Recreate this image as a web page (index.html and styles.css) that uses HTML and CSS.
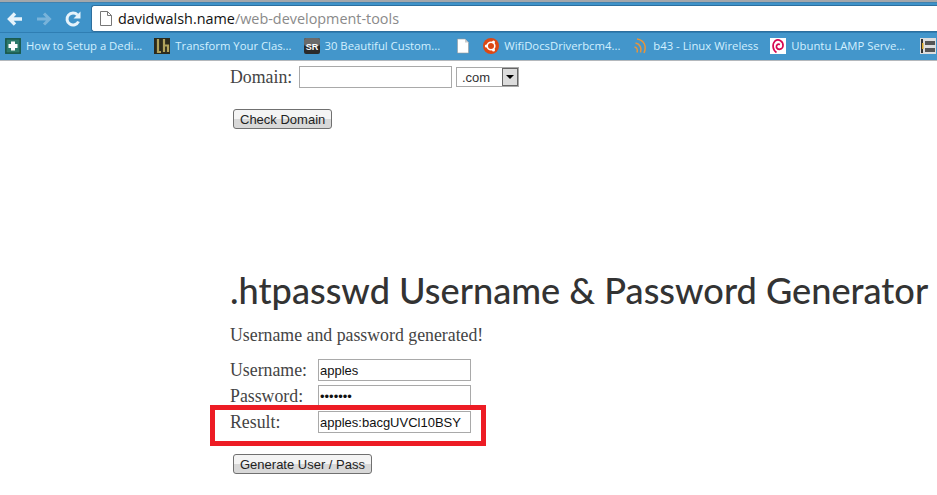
FILE: index.html
```html
<!DOCTYPE html>
<html lang="en">
<head>
    <meta charset="UTF-8">
    <title>.htpasswd Username &amp; Password Generator</title>
    <link rel="stylesheet" href="styles.css">
</head>
<body>
    <header class="chrome">
        <div class="tabstrip"></div>
        <div class="toolbar">
            <svg class="nav-icon" viewBox="0 0 18 18"><path d="M16 9H4M9 3.500L3.500 9L9 14.500" fill="none" stroke="#e6f3fb" stroke-width="3.400"/></svg>
            <svg class="nav-icon" viewBox="0 0 18 18"><path d="M2 9H14M9 3.500L14.500 9L9 14.500" fill="none" stroke="#78b3da" stroke-width="3"/></svg>
            <svg class="nav-icon" viewBox="0 0 18 18"><path d="M14.500 11.500A6 6 0 1 1 13.500 5" fill="none" stroke="#e6f3fb" stroke-width="3"/><path d="M16.500 1.500V8.500H9.500Z" fill="#e6f3fb"/></svg>
            <div class="omnibox">
                <svg class="page-icon" viewBox="0 0 12 15"><path d="M.5.500H7.500L11.500 4.500V14.500H.5Z M7.500.500V4.500H11.500" fill="#fff" stroke="#777"/></svg>
                <span class="host">davidwalsh.name</span><span class="path">/web-development-tools</span>
            </div>
        </div>
        <nav class="bookmarks">
            <a class="bookmark">
                <svg class="favicon" viewBox="0 0 16 16"><rect width="16" height="16" fill="#1f6b5c"/><rect x="1" y="1" width="14" height="14" fill="#2d7a6b" stroke="#174f45"/><path d="M8 3.500V12.500M3.500 8H12.500" stroke="#fff" stroke-width="4"/></svg>
                How to Setup a Dedi...
            </a>
            <a class="bookmark">
                <svg class="favicon" viewBox="0 0 16 16"><rect width="16" height="16" fill="#2c2a1c"/><path d="M4 1V14H7M10 1V14M10 7.500H14V14" fill="none" stroke="#b0a25c" stroke-width="2.200"/></svg>
                Transform Your Clas...
            </a>
            <a class="bookmark">
                <svg class="favicon" viewBox="0 0 16 16"><rect width="16" height="16" rx="2" fill="#2b2b2b"/><rect width="16" height="8" rx="2" fill="#6a6a6a"/><text class="favicon-text" x="8" y="11.500">SR</text></svg>
                30 Beautiful Custom...
            </a>
            <svg class="favicon favicon-plain" viewBox="0 0 16 16"><path d="M2.500 1H10L13.500 4.500V15H2.500Z" fill="#fff" stroke="#999" stroke-width=".6"/><path d="M10 1V4.500H13.500Z" fill="#ccc"/></svg>
            <a class="bookmark">
                <svg class="favicon" viewBox="0 0 16 16"><circle cx="8" cy="8" r="8" fill="#dd4814"/><circle cx="8" cy="8" r="3.800" fill="none" stroke="#fff" stroke-width="1.600"/><circle cx="3.300" cy="8" r="1.500" fill="#fff"/><circle cx="10.500" cy="3.900" r="1.500" fill="#fff"/><circle cx="10.500" cy="12.100" r="1.500" fill="#fff"/></svg>
                WifiDocsDriverbcm4...
            </a>
            <a class="bookmark">
                <svg class="favicon" viewBox="0 0 16 16"><g fill="none" stroke="#e8943a" stroke-width="1.500"><path d="M5 1C12 2 15 8 12 15"/><path d="M3.500 5C8 6 10 10 8.500 14.500"/><path d="M2.500 9C5 9.500 6 12 5 14.500"/></g></svg>
                b43 - Linux Wireless
            </a>
            <a class="bookmark">
                <svg class="favicon" viewBox="0 0 16 16"><rect width="16" height="16" fill="#fff"/><path d="M6.500 14.500C2.500 12 2 6 5 3C8.500 .5 13.500 3 13 8C12.500 11.500 8 12.500 6.500 9.500C6 7.500 7.500 5.500 10 6.500" fill="none" stroke="#d70751" stroke-width="1.700"/></svg>
                Ubuntu LAMP Serve...
            </a>
            <svg class="favicon favicon-last" viewBox="0 0 16 16"><rect width="16" height="16" fill="#ddd"/><rect x="5" y="3" width="10" height="4" fill="#555"/><rect x="5" y="10" width="10" height="4" fill="#555"/><rect x="1" y="1" width="2" height="14" fill="#333"/><rect x="2" y="5" width="1.500" height="6" fill="#d9a520"/></svg>
        </nav>
    </header>

    <main class="content">
        <form class="domain-form">
            <div class="domain-row">
                <label class="domain-label" for="domain">Domain:</label>
                <input class="text-field" type="text" id="domain">
                <div class="tld-select">
                    <span class="tld-value">.com</span>
                    <span class="tld-arrow"></span>
                </div>
            </div>
            <button class="form-button" type="button">Check Domain</button>
        </form>

        <h1 class="title">.htpasswd Username &amp; Password Generator</h1>
        <p class="status">Username and password generated!</p>

        <form class="generator">
            <div class="generator-row">
                <label for="username">Username:</label>
                <input class="text-field" type="text" id="username" value="apples">
            </div>
            <div class="generator-row">
                <label for="password">Password:</label>
                <input class="text-field" type="password" id="password" value="apples1">
            </div>
            <div class="generator-row">
                <label for="result">Result:</label>
                <input class="text-field" type="text" id="result" value="apples:bacgUVCl10BSY">
                <div class="highlight"></div>
            </div>
            <button class="form-button" type="button">Generate User / Pass</button>
        </form>
    </main>
</body>
</html>
```

FILE: styles.css
```css
html, body {
    margin: 0;
    height: 100%;
    overflow: hidden;
    background: #fff;
}
.chrome {
    background-color: #4396cb;
    border-bottom: 1px solid #b4b8bc;
}
.tabstrip {
    height: 2px;
    background: #a3a7ab;
    border-bottom: 1px solid #3f82b0;
}
.toolbar {
    display: flex;
    align-items: center;
    height: 29px;
    padding-left: 6px;
    background: #3f93c9;
    box-sizing: border-box;
    padding-top: 2px;
}
.nav-icon {
    width: 18px;
    height: 18px;
    margin-right: 11px;
}
.omnibox {
    display: flex;
    align-items: center;
    flex: 1;
    height: 27px;
    margin-left: -2px;
    padding-left: 8px;
    background: #fff;
    border: 1px solid #2d6f9e;
    border-right: none;
    border-radius: 3px 0 0 3px;
    box-sizing: border-box;
    font-family: "Open Sans", sans-serif;
    font-size: 14.400px;
}
.page-icon {
    width: 12px;
    height: 15px;
    margin-right: 6px;
}
.host {
    color: #111;
}
.path {
    color: #8a8a8a;
}
.bookmarks {
    display: flex;
    align-items: center;
    gap: 12px;
    height: 28px;
    padding: 0 0 2px 5px;
    background: #4396cb;
    border-top: 1px solid #2f7eb3;
    box-sizing: border-box;
    overflow: hidden;
}
.bookmark {
    display: flex;
    align-items: center;
    gap: 5px;
    flex: none;
    white-space: nowrap;
    color: #d2f0ff;
    font-family: "Open Sans", sans-serif;
    font-size: 11.300px;
}
.favicon {
    width: 16px;
    height: 16px;
    flex: none;
}
.favicon-plain {
    margin-left: 3px;
}
.favicon-last {
    margin-left: 3px;
}
.favicon-text {
    fill: #fff;
    font-family: "Liberation Sans", sans-serif;
    font-size: 9px;
    font-weight: bold;
    text-anchor: middle;
}
.content {
    padding: 5px 0 0 230px;
    font-family: "Liberation Serif", serif;
    font-size: 17.800px;
    color: #444;
}
.text-field {
    width: 153px;
    height: 22px;
    padding: 1px;
    border: 1px solid #a9a9a9;
    box-sizing: border-box;
    font-family: "Liberation Sans", sans-serif;
    font-size: 13px;
    color: #111;
    background: #fff;
}
.domain-row {
    display: flex;
    align-items: center;
    height: 22px;
}
.domain-label {
    width: 69px;
}
.tld-select {
    display: flex;
    align-items: center;
    justify-content: space-between;
    width: 63px;
    height: 20px;
    margin-left: 4px;
    box-sizing: border-box;
    border: 1px solid #a9a9a9;
    padding-left: 5px;
    font-family: "Liberation Sans", sans-serif;
    font-size: 13px;
    color: #333;
}
.tld-arrow {
    position: relative;
    width: 16px;
    height: 18px;
    box-sizing: border-box;
    background: #dcdcdc;
    border: 1px solid #666;
}
.tld-arrow::after {
    content: "";
    position: absolute;
    left: 3px;
    top: 6px;
    border-left: 4px solid transparent;
    border-right: 4px solid transparent;
    border-top: 4px solid #000;
}
.form-button {
    display: block;
    margin-left: 3px;
    height: 20px;
    padding: 0 6px;
    border: 1px solid #707070;
    border-radius: 3px;
    background: linear-gradient(#f4f4f4 50%, #d8d8d8 50%);
    font-family: "Liberation Sans", sans-serif;
    font-size: 13px;
    color: #222;
}
.domain-form .form-button {
    margin-top: 21px;
}
.title {
    margin: 139px 0 0;
    font-family: Lato, sans-serif;
    font-size: 36.150px;
    line-height: 44px;
    font-weight: 500;
    color: #333;
    white-space: nowrap;
}
.status {
    margin: 13px 0 14px;
    line-height: 20px;
}
.generator-row {
    position: relative;
    display: flex;
    align-items: center;
    height: 22px;
    margin-bottom: 4px;
}
.generator-row label {
    width: 88px;
}
.highlight {
    position: absolute;
    left: -20px;
    top: -6px;
    width: 276px;
    height: 41px;
    box-sizing: border-box;
    border: 5px solid #ed1c24;
}
.generator .form-button {
    margin-top: 21px;
}
```
